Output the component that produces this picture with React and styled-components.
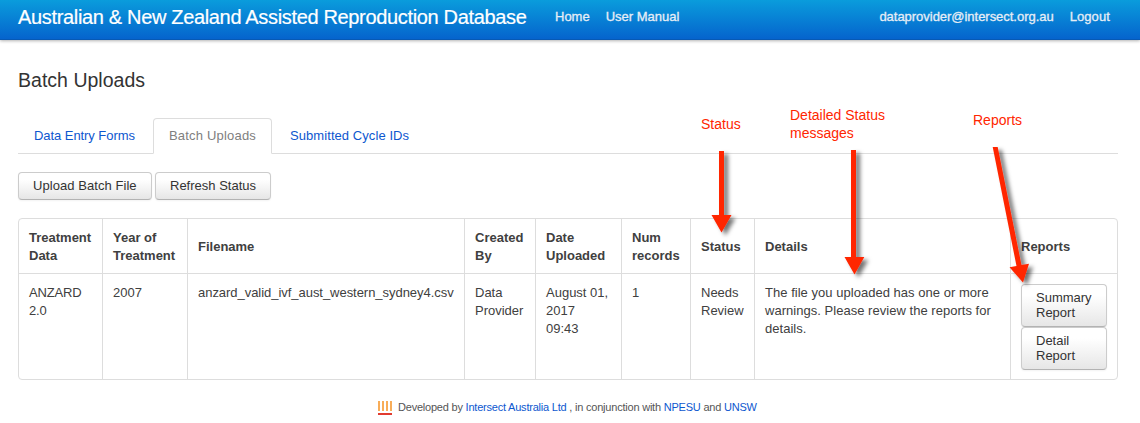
import React from "react";
import styled, { createGlobalStyle } from "styled-components";

const GlobalStyle = createGlobalStyle`
  * { box-sizing: border-box; }
  body {
    margin: 0;
    background: #fff;
    color: #333;
    font: 13px/18px "Liberation Sans", Arial, sans-serif;
    overflow: hidden;
  }
`;

const Page = styled.div`
  position: relative;
  width: 1140px;
  height: 423px;
`;

const Navbar = styled.header`
  display: flex;
  align-items: center;
  height: 40px;
  padding: 0 30px 5px 18px;
  background: linear-gradient(#0a9cdc, #0564cd);
  border-bottom: 1px solid #0759b4;
  box-shadow: 0 1px 3px rgba(0, 0, 0, 0.3);
`;

const Brand = styled.a`
  margin-right: 28px;
  width: 509px;
  font-size: 20px;
  line-height: 20px;
  white-space: nowrap;
  letter-spacing: -0.335px;
  color: #fff;
  -webkit-text-stroke: 0.2px #fff;
`;

const NavLink = styled.a`
  margin-right: ${(p) => (p.$last ? 0 : "16px")};
  margin-left: ${(p) => (p.$push ? "auto" : 0)};
  color: #e6edf6;
  white-space: nowrap;
  letter-spacing: ${(p) => p.$track || 0}px;
  -webkit-text-stroke: 0.3px #e6edf6;
`;

const Content = styled.main`
  padding: 31px 22px 0 18px;
`;

const Title = styled.h1`
  margin: 0;
  font-size: 19.5px;
  line-height: 18px;
  font-weight: 400;
  color: #333;
  letter-spacing: 0.02px;
`;

const Tabs = styled.nav`
  display: flex;
  height: 36px;
  margin: 29px 0 18px;
  border-bottom: 1px solid #ddd;
`;

const Tab = styled.a`
  height: 36px;
  margin-right: 2px;
  padding: 8px 15px;
  border: 1px solid ${(p) => (p.$active ? "#ddd" : "transparent")};
  border-bottom-color: ${(p) => (p.$active ? "#fff" : "#ddd")};
  border-radius: 4px 4px 0 0;
  background: ${(p) => (p.$active ? "#fff" : "none")};
  color: ${(p) => (p.$active ? "#808080" : "#0d57cf")};
  white-space: nowrap;
  width: ${(p) => p.$width}px;
  letter-spacing: ${(p) => p.$track || 0}px;
`;

const Actions = styled.div`
  display: flex;
  gap: 3px;
  margin-bottom: 18px;
`;

const Button = styled.button`
  display: block;
  width: ${(p) => p.$width}px;
  height: ${(p) => (p.$tall ? 43 : 28)}px;
  padding: 0 14px ${(p) => (p.$tall ? 1 : 0)}px;
  border: 1px solid #ccc;
  border-bottom-color: #b3b3b3;
  border-radius: 4px;
  background: linear-gradient(#fff, #fff 25%, #e6e6e6);
  box-shadow: 0 1px 2px rgba(0, 0, 0, 0.05);
  color: #333;
  font: inherit;
  line-height: ${(p) => (p.$tall ? 15 : 18)}px;
  letter-spacing: ${(p) => p.$track || 0}px;
  text-align: left;
  white-space: nowrap;
`;

const Table = styled.table`
  width: 1100px;
  table-layout: fixed;
  border: 1px solid #ddd;
  border-radius: 4px;
  border-collapse: separate;
  border-spacing: 0;
`;

const Th = styled.th`
  height: 54px;
  padding: 10px 9px 8px 10px;
  text-align: left;
  vertical-align: middle;
  font-weight: 700;
  color: #404040;
  & + & { border-left: 1px solid #ddd; }
`;

const Td = styled.td`
  height: 106px;
  padding: 10px 8px 9px 10px;
  vertical-align: top;
  border-top: 1px solid #ddd;
  color: #404040;
  white-space: nowrap;
  letter-spacing: ${(p) => p.$track || 0}px;
  & + & { border-left: 1px solid #ddd; }
`;

const Footer = styled.footer`
  display: flex;
  align-items: center;
  margin: 18px 0 0 360px;
  font-size: 11px;
  color: #555;
  white-space: nowrap;
  letter-spacing: -0.212px;
  a { color: #0d57cf; }
`;

const Logo = styled.svg`
  width: 14px;
  height: 14px;
  margin: 2px 6px 0 0;
`;

const Arrows = styled.svg`
  position: absolute;
  inset: 0;
  pointer-events: none;
`;

const Note = styled.div`
  position: absolute;
  left: ${(p) => p.$x}px;
  top: ${(p) => p.$y}px;
  font-size: 14px;
  line-height: 18px;
  white-space: nowrap;
  color: #ff2600;
`;

const columns = [
  { width: 83, lines: ["Treatment", "Data"] },
  { width: 85, lines: ["Year of", "Treatment"] },
  { width: 277, lines: ["Filename"] },
  { width: 71, lines: ["Created", "By"] },
  { width: 86, lines: ["Date", "Uploaded"] },
  { width: 69, lines: ["Num", "records"] },
  { width: 64, lines: ["Status"] },
  { width: 256, lines: ["Details"] },
  { width: 107, lines: ["Reports"] },
];

const cells = [
  { lines: ["ANZARD", "2.0"], track: -0.15 },
  { lines: ["2007"] },
  { lines: ["anzard_valid_ivf_aust_western_sydney4.csv"], track: -0.04 },
  { lines: ["Data", "Provider"] },
  { lines: ["August 01,", "2017", "09:43"] },
  { lines: ["1"] },
  { lines: ["Needs", "Review"] },
  {
    lines: [
      "The file you uploaded has one or more",
      "warnings. Please review the reports for",
      "details.",
    ],
    track: 0.03,
  },
];

const Lines = ({ lines }) =>
  lines.map((line, i) => (
    <React.Fragment key={line}>
      {i > 0 && <br />}
      {line}
    </React.Fragment>
  ));

export default function App() {
  return (
    <Page>
      <GlobalStyle />
      <Navbar>
        <Brand>Australian &amp; New Zealand Assisted Reproduction Database</Brand>
        <NavLink>Home</NavLink>
        <NavLink>User Manual</NavLink>
        <NavLink $push $track={-0.03}>dataprovider@intersect.org.au</NavLink>
        <NavLink $last $track={0.1}>Logout</NavLink>
      </Navbar>
      <Content>
        <Title>Batch Uploads</Title>
        <Tabs>
          <Tab $width={133} $track={-0.06}>Data Entry Forms</Tab>
          <Tab $width={119} $track={0.19} $active>Batch Uploads</Tab>
          <Tab $width={152} $track={0.07}>Submitted Cycle IDs</Tab>
        </Tabs>
        <Actions>
          <Button $width={134} $track={0.06}>Upload Batch File</Button>
          <Button $width={116}>Refresh Status</Button>
        </Actions>
        <Table>
          <colgroup>
            {columns.map((c) => <col key={c.lines[0]} style={{ width: c.width }} />)}
          </colgroup>
          <thead>
            <tr>
              {columns.map((c) => (
                <Th key={c.lines.join()}><Lines lines={c.lines} /></Th>
              ))}
            </tr>
          </thead>
          <tbody>
            <tr>
              {cells.map((c) => (
                <Td key={c.lines.join()} $track={c.track}><Lines lines={c.lines} /></Td>
              ))}
              <Td>
                <Button $width={86} $tall>Summary<br />Report</Button>
                <Button $width={86} $tall>Detail<br />Report</Button>
              </Td>
            </tr>
          </tbody>
        </Table>
        <Footer>
          <Logo viewBox="0 0 14 14">
            <path d="M1 0v10M5 0v10M9 0v10M13 0v10" stroke="#f8a548" strokeWidth="1.8" />
            <path d="M0 13h14" stroke="#e23b30" strokeWidth="2" />
          </Logo>
          <span>
            Developed by <a>Intersect Australia Ltd</a> , in conjunction with <a>NPESU</a> and <a>UNSW</a>
          </span>
        </Footer>
      </Content>
      <Note $x={701} $y={115}>Status</Note>
      <Note $x={790} $y={106}>Detailed Status<br />messages</Note>
      <Note $x={973} $y={111}>Reports</Note>
      <Arrows width="1140" height="423" viewBox="0 0 1140 423">
        <defs>
          <filter id="shade" x="-100%" y="-20%" width="400%" height="150%">
            <feDropShadow dx="4" dy="3" stdDeviation="1.9" floodColor="#000" floodOpacity="0.55" />
          </filter>
        </defs>
        <g fill="#ff2600">
          <path filter="url(#shade)" d="M719 151h5v64h7.5L721.5 232.500L711.500 215H719z" />
          <path filter="url(#shade)" d="M851 150h5v107h8.300L854.500 274.500L844.500 257H851z" />
          <path filter="url(#shade)" d="M992.700 147h5L1021.500 265L1029 263.700L1023 282.500L1009.500 267.300L1016.500 266z" />
        </g>
      </Arrows>
    </Page>
  );
}
